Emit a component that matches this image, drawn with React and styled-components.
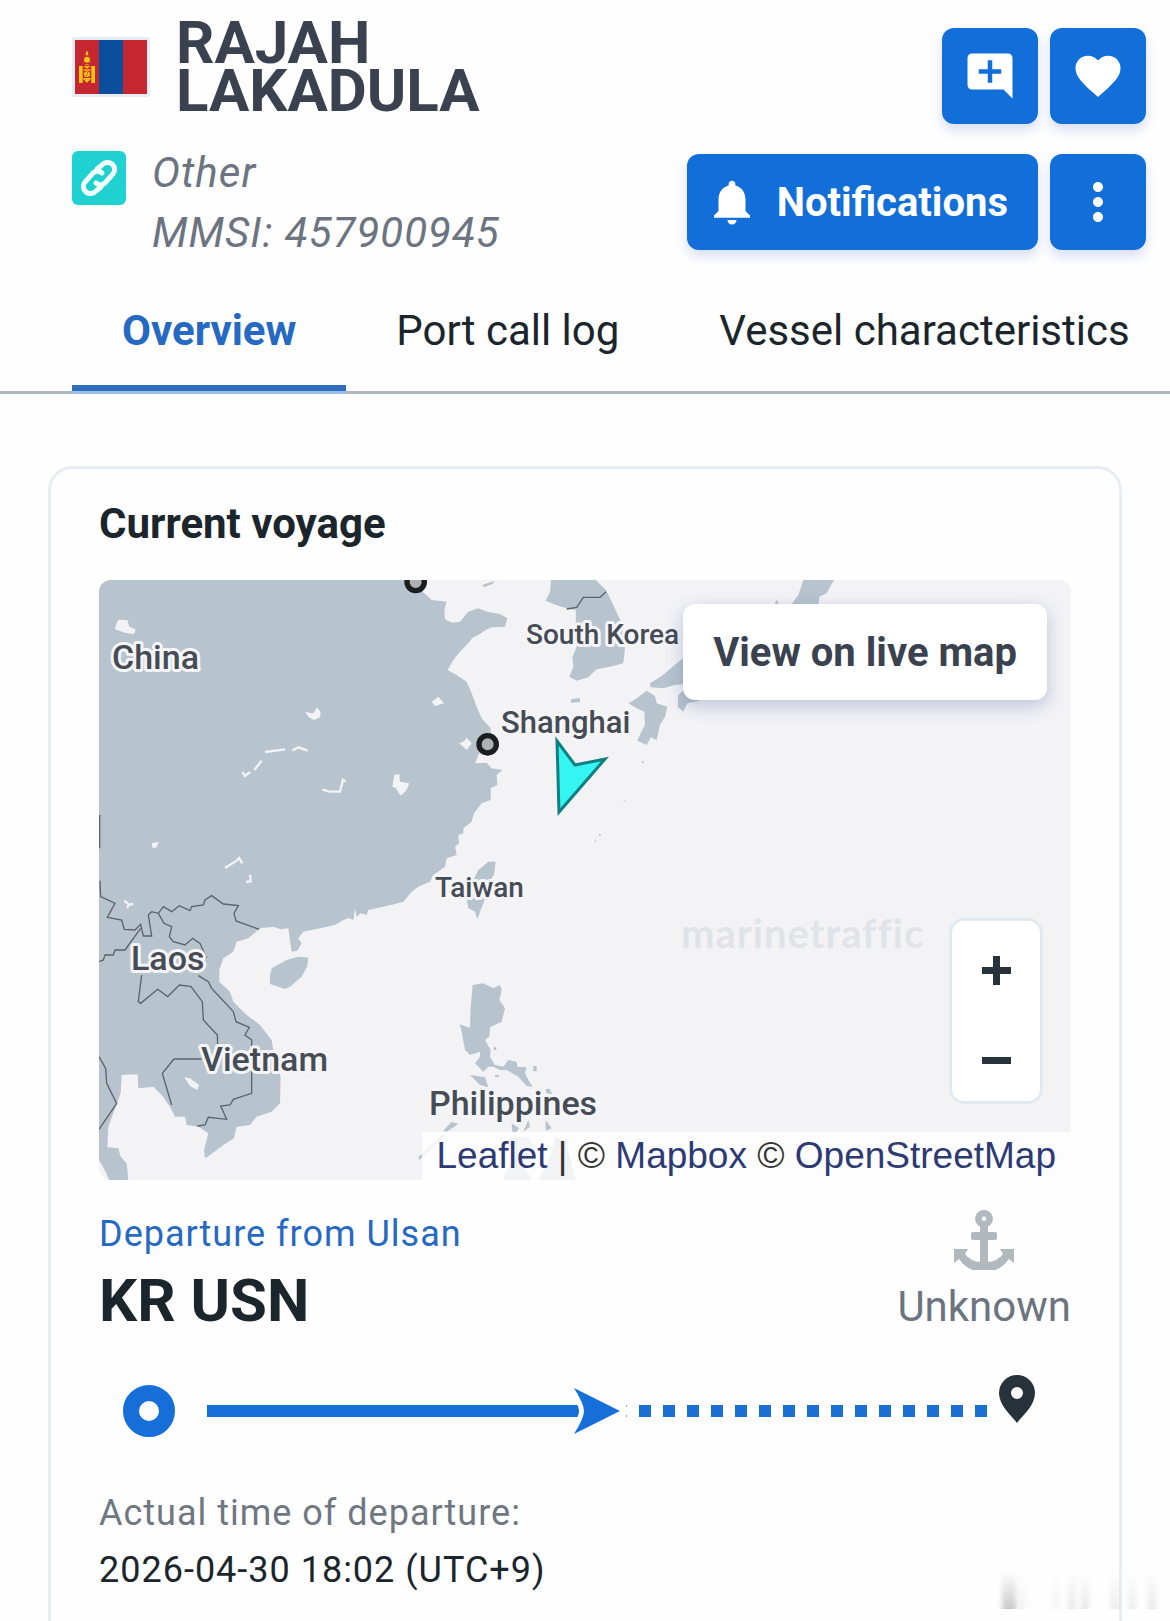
import styled, { createGlobalStyle } from 'styled-components';
import { MdAddComment, MdFavorite, MdNotifications, MdMoreVert } from 'react-icons/md';

const GlobalStyle = createGlobalStyle`
*, *::before, *::after {
  box-sizing: border-box;
}

body {
  margin: 0;
  background: #fefefe;
  color: #1b252c;
  font-family: Roboto, "Liberation Sans", sans-serif;
}
`;

const Page = styled.div`
display: flex;
flex-direction: column;
min-height: 100vh;
overflow-x: hidden;
position: relative;
`;

const Header = styled.header`
display: flex;
justify-content: space-between;
align-items: flex-start;
padding: 19px 24px 0 72px;
`;

const Identity = styled.div`
display: flex;
flex-direction: column;
gap: 28px;
`;

const NameRow = styled.div`
display: flex;
align-items: center;
gap: 26px;
`;

const FlagFrame = styled.svg`
width: 78px;
height: 60px;
border: 3px solid #e6ebf4;
border-radius: 3px;
`;

const ShipName = styled.h1`
margin: 0;
width: min-content;
font-size: 60px;
line-height: 48px;
font-weight: 700;
color: #3a424f;
`;

const TypeRow = styled.div`
display: flex;
align-items: flex-start;
gap: 26px;
`;

const LinkBadge = styled.svg`
width: 54px;
height: 54px;
margin-top: 8px;
border-radius: 6px;
background: #1fd1d0;
`;

const TypeText = styled.p`
margin: 0;
font-size: 42px;
line-height: 60px;
letter-spacing: 1px;
font-style: italic;
color: #6b7480;
`;

const Actions = styled.div`
display: flex;
flex-direction: column;
align-items: flex-end;
gap: 30px;
padding-top: 9px;
`;

const ActionRow = styled.div`
display: flex;
gap: 12px;
`;

const ActionButton = styled.button`
display: flex;
align-items: center;
justify-content: center;
gap: 18px;
height: 96px;
min-width: 96px;
padding: ${props => (props.$wide ? '0 30px 0 18px' : '0')};
border: 0;
border-radius: 12px;
background: #126ed8;
color: #fff;
font-family: inherit;
font-size: 40px;
font-weight: 700;
box-shadow: 0 6px 12px rgba(60, 90, 200, 0.2);
cursor: pointer;
`;

const Tabs = styled.nav`
display: flex;
padding-left: 72px;
border-bottom: 3px solid #aeb6c0;
`;

const Tab = styled.a`
position: relative;
flex: none;
padding: 38px 50px 30px;
font-size: 42px;
line-height: 60px;
text-decoration: none;
font-weight: ${props => (props.$active ? 700 : 400)};
color: ${props => (props.$active ? '#2569c3' : '#1b252c')};

&::after {
  content: '';
  display: ${props => (props.$active ? 'block' : 'none')};
  position: absolute;
  left: 0;
  right: 0;
  bottom: -3px;
  height: 9px;
  background: linear-gradient(#2f6ebf 6px, #9cbfe8 6px);
}
`;

const Card = styled.main`
flex: 1;
margin: 72px 48px 0;
padding: 25px 48px 24px;
border: 3px solid #e5eef2;
border-bottom: 0;
border-radius: 24px 24px 0 0;
`;

const CardTitle = styled.h2`
margin: 0 0 26px;
font-size: 42px;
line-height: 60px;
font-weight: 700;
`;

const MapBox = styled.section`
position: relative;
height: 600px;
border-radius: 12px;
overflow: hidden;
background: #f3f3f6;
`;

const MapCanvas = styled.svg`
display: block;
width: 100%;
height: 100%;
`;

const MapLabel = styled.text`
font-family: Roboto, sans-serif;
font-size: ${props => props.$size}px;
font-weight: 500;
fill: #454c56;
stroke: #f5f5f8;
stroke-width: 6px;
stroke-linejoin: round;
paint-order: stroke;
`;

const MapMark = styled.text`
font-family: Lato, sans-serif;
font-size: 40px;
font-weight: 700;
letter-spacing: 1px;
fill: #e0e4e8;
`;

const LiveMapButton = styled.button`
position: absolute;
top: 24px;
right: 24px;
height: 96px;
padding: 0 30px;
border: 0;
border-radius: 12px;
background: #fff;
color: #3a424f;
font-family: inherit;
font-size: 40px;
font-weight: 700;
box-shadow: 0 6px 18px rgba(60, 80, 150, 0.3);
cursor: pointer;
`;

const ZoomBox = styled.div`
position: absolute;
right: 28px;
bottom: 76px;
width: 94px;
height: 186px;
display: flex;
flex-direction: column;
padding-top: 4px;
border: 3px solid #e0ebf1;
border-radius: 15px;
background: #fff;
`;

const ZoomButton = styled.button`
flex: none;
height: 90px;
padding: 0;
display: flex;
align-items: center;
justify-content: center;
border: 0;
background: none;
cursor: pointer;
`;

const Attribution = styled.div`
position: absolute;
right: 0;
bottom: 0;
padding: 0 15px;
background: rgba(255, 255, 255, 0.8);
font-family: "Liberation Sans", Arial, sans-serif;
font-size: 37px;
line-height: 48px;
color: #333;

a {
  color: #2d3a73;
  text-decoration: none;
}
`;

const PortRow = styled.div`
display: flex;
justify-content: space-between;
margin-top: 30px;
`;

const PortSide = styled.div`
display: flex;
flex-direction: column;
align-items: ${props => (props.$center ? 'center' : 'flex-start')};
gap: 7px;
`;

const DepartureLink = styled.a`
font-size: 36px;
line-height: 48px;
letter-spacing: 1px;
color: #2569c3;
text-decoration: none;
`;

const PortCode = styled.strong`
font-size: 60px;
line-height: 72px;
font-weight: 700;
`;

const Unknown = styled.span`
font-size: 42px;
line-height: 60px;
color: #6b7480;
`;

const Track = styled.div`
display: flex;
align-items: center;
margin-top: 38px;
padding: 0 36px 0 24px;
`;

const TrackStart = styled.span`
flex: none;
width: 52px;
height: 52px;
margin-right: 32px;
border: 16px solid #166fd8;
border-radius: 50%;
`;

const TrackDone = styled.span`
flex: 372 1 0;
height: 12px;
background: #166fd8;
`;

const TrackArrow = styled.svg`
flex: none;
width: 46px;
height: 46px;
margin-left: -5px;
margin-right: 7px;
overflow: visible;
`;

const TrackLeft = styled.span`
flex: 360 1 0;
height: 12px;
background: repeating-linear-gradient(to right, transparent 0 12px, #1a6fd4 12px 24px);
`;

const TrackPin = styled.svg`
flex: none;
width: 36px;
height: 48px;
margin-left: 12px;
margin-bottom: 24px;
`;

const Times = styled.dl`
display: flex;
flex-direction: column;
gap: 9px;
margin: 42px 0 0;
font-size: 36px;
line-height: 48px;
letter-spacing: 1px;

dt {
  color: #6f7782;
}

dd {
  margin: 0;
}
`;

const CornerMark = styled.svg`
position: absolute;
right: 0;
bottom: 10px;
width: 190px;
height: 44px;
pointer-events: none;
`;

const mainland = `M0 0H978L971 35 998 60 1043 65 1036 90 1038 118 1058 128 1083 125 1108 95 1138 85 1165 95 1203 102 1225 115
1218 140 1178 142 1160 150 1138 165 1120 174 1108 190 1083 215 1063 240 1046 270 1073 285 1103 305 1118 340 1133 380 1148 415
1175 445 1175 460 1138 525 1128 550 1163 548 1178 565 1211 570 1193 585 1195 615 1175 625 1175 660 1148 670 1125 700 1118 725
1093 745 1093 760 1078 765 1080 790 1068 800 1073 825 1043 835 1038 860 1003 885 993 905 958 920 938 935 913 965 888 972 853 980
808 990 803 1005 785 1000 773 1010 768 985 763 1020 748 1014 733 1020 708 1035 663 1045 613 1055 598 1075 608 1090 595 1112
578 1115 573 1080 568 1045 545 1048 523 1040 483 1045 448 1075 413 1085 403 1115 373 1135 361 1170 361 1205 393 1235 403 1265
443 1305 483 1335 518 1380 526 1430 545 1490 543 1570 518 1595 473 1610 453 1635 413 1640 405 1675 373 1695 333 1725 318 1735
315 1710 328 1660 298 1640 263 1635 258 1610 228 1610 213 1580 188 1545 163 1520 118 1525 116 1483 68 1485 65 1540 43 1600
28 1640 25 1702 58 1705 65 1730 83 1750 88 1800H30L20 1775 0 1740Z`;

const islands = [
  'M513 1185 518 1165 563 1140 598 1130 628 1133 625 1158 608 1190 573 1220 558 1227 513 1212Z',
  'M1190 845 1185 885 1173 900 1155 965 1143 995 1135 1018 1128 995 1108 985 1103 960 1118 910 1138 870 1168 845Z',
  `M1121 1215 1153 1210 1183 1225 1203 1215 1208 1230 1201 1260 1218 1285 1208 1325 1173 1342 1171 1370 1158 1380 1175 1410
  1173 1430 1188 1455 1213 1460 1228 1440 1253 1445 1255 1460 1282 1462 1278 1480 1288 1500 1301 1520 1283 1518 1258 1490 1223
  1470 1203 1470 1183 1460 1168 1460 1153 1475 1128 1450 1143 1430 1143 1415 1113 1425 1098 1410 1086 1345 1081 1333 1113 1343 1115 1280Z`,
  'M1113 1485 1158 1492 1168 1522 1143 1515Z',
  'M1188 1485H1200V1491H1188ZM1303 1458H1313V1474H1303ZM1266 1462H1280V1470H1266ZM1184 1402H1192V1410H1184Z',
  'M1340 1528 1352 1526 1360 1542 1342 1540Z',
  'M1058 1625 1078 1632 1043 1655 1033 1652Z',
  'M1238 1630 1260 1645 1252 1656 1240 1655Z',
  'M1288 1620 1293 1640 1273 1655Z',
  'M1340 1620 1358 1645 1340 1652Z',
  'M1230 1672H1290L1310 1720 1270 1750 1300 1800H1210L1240 1740Z',
  'M1370 1670 1400 1684 1430 1800H1320L1350 1740Z',
  'M958 1732 1032 1662 1038 1667 962 1740Z',
  `M1356 0H1490L1521 30 1543 75 1568 130 1573 170 1578 205 1573 250 1533 260 1493 268 1468 292 1433 302 1411 290 1423 260
  1420 232 1433 200 1423 160 1431 120 1430 90 1403 85 1380 78 1358 70 1340 62 1353 35Z`,
  'M1416 358 1443 354 1443 366 1416 368Z',
  'M1151 14 1188 2 1180 12 1155 22Z',
  `M1588 370 1613 355 1643 332 1668 348 1673 370 1705 380 1698 410 1683 435 1673 480 1655 472 1643 495 1615 482 1625 460
  1638 435 1636 395 1613 385Z`,
  'M1653 310 1688 288 1755 232 1780 225V310L1728 315 1693 325 1655 322Z',
  'M1738 345 1760 325 1800 362 1765 370 1753 395 1736 380Z',
  'M2113 0H2205L2183 40 2161 50 2158 80 2078 72 2098 45Z',
  'M2033 58 2041 76 2026 76Z',
  'M1570 664 1580 661 1580 664ZM1486 784 1490 778 1492 786ZM1500 762H1505V767H1500ZM1629 543H1634V549H1629Z',
];

const lakes = [
  'M58 120H85L91 140 110 148 105 163 78 158 48 148 51 135Z',
  'M618 395 638 400 645 398 653 382 665 395 663 412 645 420 628 410Z',
  'M886 585 901 582 903 605 930 610 923 630 905 647 891 625 880 620Z',
  'M158 790 180 785 171 803 160 803Z',
  'M998 365 1018 350 1035 370 1008 378Z',
  'M1081 490 1095 484 1103 473 1118 490 1103 510Z',
  'M903 610 930 612 908 645 900 640Z',
  'M256 1492 273 1495 300 1515 295 1530 273 1518Z',
];

const rivers = [
  'M498 516 558 508',
  'M580 511 598 502 626 512',
  'M488 542 466 570',
  'M430 576 438 588 453 576',
  'M670 629 693 635 723 635 732 600 740 604',
  'M378 864 413 842 420 834 430 850',
  'M453 885 455 904 441 906',
  'M76 962 90 974 103 972M84 984 90 974',
];

const borders = [
  `M3 902 5 950 48 970 25 1012 68 1020 76 1048 108 1050 125 1033 133 1068 158 1068 148 1005 158 995 178 1000 193 980 218 995
  241 977 273 992 278 980 313 975 318 960 338 947 373 972 418 977 405 1000 411 1023 481 1048`,
  'M178 1000 195 1030 218 1040 211 1070 223 1085 258 1095 281 1075 303 1090 323 1135',
  `M298 1187 328 1205 338 1225 403 1295 411 1325 451 1342 438 1365 458 1380 458 1540 403 1558 393 1575 365 1578 383 1618
  328 1612 318 1635 295 1638`,
  'M128 1185 118 1265 125 1270 176 1228 206 1250 241 1215 276 1220 310 1265 313 1320 355 1365 356 1400',
  'M308 1437 225 1437 190 1480 218 1575',
  'M0 1145 13 1140 18 1125 43 1125 48 1110 78 1110 125 1045',
  'M0 1430 20 1465 23 1510 53 1570 0 1648',
  'M2 705V805',
  'M1403 87 1433 82 1453 52 1503 52 1521 35',
];

const labels = [
  { text: 'China', x: 13, y: 89, size: 34 },
  { text: 'South Korea', x: 427, y: 64, size: 28 },
  { text: 'Shanghai', x: 402, y: 153, size: 31 },
  { text: 'Taiwan', x: 336, y: 317, size: 28 },
  { text: 'Laos', x: 32, y: 390, size: 34 },
  { text: 'Vietnam', x: 102, y: 491, size: 34 },
  { text: 'Philippines', x: 330, y: 535, size: 34 },
];

// x, width and strength of each faded stroke in the corner
const strokes = [
  [22, 14, 0.3],
  [38, 8, 0.06],
  [72, 8, 0.05],
  [88, 8, 0.12],
  [101, 8, 0.12],
  [130, 9, 0.1],
  [148, 8, 0.1],
  [167, 10, 0.1],
];

function Flag() {
  return (
    <FlagFrame viewBox="0 0 216 162" preserveAspectRatio="none" role="img" aria-label="Mongolia">
      <rect width="216" height="162" fill="#c4272f" />
      <rect x="72" width="72" height="162" fill="#0a4f9c" />
      <g fill="#f9c513">
        <rect x="12" y="78" width="11" height="51" />
        <rect x="49" y="78" width="11" height="51" />
        <path d="M36 32c4 6 5 9 3 14h-6c-2-5-1-8 3-14z" />
        <circle cx="36" cy="59" r="9" />
        <path d="M24 62a12 12 0 0 0 24 0l-3 10H27z" />
        <path d="M25 78h22l-11 8zM25 118h22l-11 10z" />
        <rect x="25" y="88" width="22" height="4" />
        <rect x="25" y="114" width="22" height="4" />
        <circle cx="36" cy="103" r="9" />
      </g>
      <path d="M36 96a4 4 0 0 1 0 7a4 4 0 0 0 0 7" fill="none" stroke="#c4272f" strokeWidth="2" />
    </FlagFrame>
  );
}

function VoyageMap() {
  return (
    <MapBox aria-label="Current position">
      <MapCanvas viewBox="0 0 972 600" preserveAspectRatio="xMidYMid slice">
        {/* geometry is stored at three units per map pixel */}
        <g transform="scale(0.33333)">
          <g fill="#b7c4ce">
            <path d={mainland} />
            {islands.map(d => <path key={d} d={d} />)}
          </g>
          <g fill="#f3f3f6">
            {lakes.map(d => <path key={d} d={d} />)}
          </g>
          <g fill="none" stroke="#f3f3f6" strokeWidth="7">
            {rivers.map(d => <path key={d} d={d} />)}
          </g>
          <g fill="none" stroke="#5b636b" strokeWidth="4">
            {borders.map(d => <path key={d} d={d} />)}
          </g>
          <g fill="#aeb0b2" stroke="#1c1d1f" strokeWidth="16">
            <circle cx="1166" cy="493" r="26" />
            <circle cx="950" cy="6" r="26" />
          </g>
        </g>
        {labels.map(l => (
          <MapLabel key={l.text} x={l.x} y={l.y} $size={l.size}>{l.text}</MapLabel>
        ))}
        <MapMark x="582" y="368">marinetraffic</MapMark>
        <path d="M458 161 476 185 506 179 460 232Z" fill="#34f5f2" stroke="#0e7f82" strokeWidth="3" />
      </MapCanvas>
      <LiveMapButton type="button">View on live map</LiveMapButton>
      <ZoomBox>
        <ZoomButton type="button" aria-label="Zoom in">
          <svg width="29" height="29" viewBox="0 0 29 29" fill="#28323a">
            <path d="M11 0h7v11h11v7H18v11h-7V18H0v-7h11z" />
          </svg>
        </ZoomButton>
        <ZoomButton type="button" aria-label="Zoom out">
          <svg width="29" height="29" viewBox="0 0 29 29" fill="#28323a">
            <path d="M0 11h29v7H0z" />
          </svg>
        </ZoomButton>
      </ZoomBox>
      <Attribution>
        <a href="#leaflet">Leaflet</a> | © <a href="#mapbox">Mapbox</a> © <a href="#osm">OpenStreetMap</a>
      </Attribution>
    </MapBox>
  );
}

function App() {
  return (
    <Page>
      <GlobalStyle />
      <Header>
        <Identity>
          <NameRow>
            <Flag />
            <ShipName>RAJAH LAKADULA</ShipName>
          </NameRow>
          <TypeRow>
            <LinkBadge viewBox="0 0 54 54" aria-hidden="true">
              <g fill="none" stroke="#f4ffff" strokeWidth="5" strokeLinecap="round">
                <path d="M25 18l5-4a7 7 0 0 1 11 9l-8 9a7 7 0 0 1-9 0" />
                <path d="M29 36l-5 4a7 7 0 0 1-11-9l8-9a7 7 0 0 1 9 0" />
              </g>
            </LinkBadge>
            <div>
              <TypeText>Other</TypeText>
              <TypeText>MMSI: 457900945</TypeText>
            </div>
          </TypeRow>
        </Identity>
        <Actions>
          <ActionRow>
            <ActionButton type="button" aria-label="Add note"><MdAddComment size={54} /></ActionButton>
            <ActionButton type="button" aria-label="Add to favourites"><MdFavorite size={54} /></ActionButton>
          </ActionRow>
          <ActionRow>
            <ActionButton type="button" $wide><MdNotifications size={54} />Notifications</ActionButton>
            <ActionButton type="button" aria-label="More"><MdMoreVert size={60} /></ActionButton>
          </ActionRow>
        </Actions>
      </Header>

      <Tabs>
        <Tab href="#overview" $active>Overview</Tab>
        <Tab href="#port-calls">Port call log</Tab>
        <Tab href="#characteristics">Vessel characteristics</Tab>
      </Tabs>

      <Card>
        <CardTitle>Current voyage</CardTitle>
        <VoyageMap />

        <PortRow>
          <PortSide>
            <DepartureLink href="#ulsan">Departure from Ulsan</DepartureLink>
            <PortCode>KR USN</PortCode>
          </PortSide>
          <PortSide $center>
            <svg width="60" height="60" viewBox="0 0 60 60" fill="#b1b8be" aria-hidden="true">
              <path fillRule="evenodd" d="M30 0a8.700 8.700 0 0 1 4 16.500V22h7q2 0 2 2v4q0 2-2 2h-7v22q10-1 15-8l-3-5h14v14l-5-4q-9 13-25 13T5 49l-5 4V39h14l-3 5q5 7 15 8V30h-7q-2 0-2-2v-4q0-2 2-2h7v-5.500A8.700 8.700 0 0 1 30 0zm0 6.500a2.300 2.300 0 1 0 0 4.600 2.300 2.300 0 0 0 0-4.600z" />
            </svg>
            <Unknown>Unknown</Unknown>
          </PortSide>
        </PortRow>

        <Track>
          <TrackStart />
          <TrackDone />
          <TrackArrow viewBox="0 0 46 46" aria-hidden="true">
            <path d="M-6 0Q5 17 5 23T-6 46H0L12 23 0 0Z" fill="#fefefe" />
            <path d="M0 0 46 23 0 46Q10 30 10 23T0 0Z" fill="#166fd8" />
            <path d="M52 17h1v2h-1zM52 27h1v2h-1z" fill="#7fa8d8" />
          </TrackArrow>
          <TrackLeft />
          <TrackPin viewBox="0 0 36 48" aria-hidden="true">
            <path fillRule="evenodd" fill="#27323b" d="M18 0a18 18 0 0 1 18 18C36 30 25 39 18 48 11 39 0 30 0 18A18 18 0 0 1 18 0zm0 12a6 6 0 1 0 0 12 6 6 0 0 0 0-12z" />
          </TrackPin>
        </Track>

        <Times>
          <dt>Actual time of departure:</dt>
          <dd>2026-04-30 18:02 (UTC+9)</dd>
        </Times>
      </Card>

      <CornerMark viewBox="0 0 190 44" aria-hidden="true">
        <defs>
          <linearGradient id="fade" x1="0" y1="0" x2="0" y2="1">
            <stop offset="0" stopColor="#555" stopOpacity="0" />
            <stop offset="1" stopColor="#555" />
          </linearGradient>
          <filter id="soft" x="-50%" width="200%" y="0" height="1">
            <feGaussianBlur stdDeviation="2.500 0" />
          </filter>
        </defs>
        {strokes.map(([x, width, opacity]) => (
          <rect key={x} x={x} y="4" width={width} height="38" opacity={opacity} fill="url(#fade)" filter="url(#soft)" />
        ))}
      </CornerMark>
    </Page>
  );
}

export default App;
